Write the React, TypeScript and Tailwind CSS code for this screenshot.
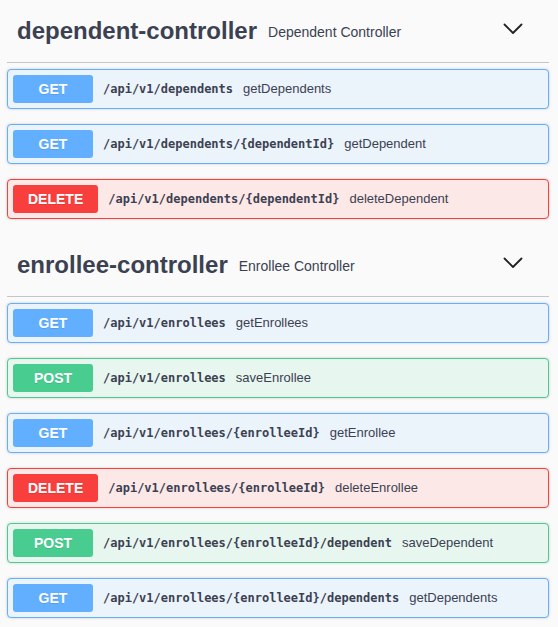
import React from "react";

type Method = "GET" | "POST" | "DELETE";

const methodStyles: Record<Method, { block: string; badge: string }> = {
  GET: { block: "bg-[#ebf3fb] border-[#61affe]", badge: "bg-[#61affe]" },
  POST: { block: "bg-[#e8f6f0] border-[#49cc90]", badge: "bg-[#49cc90]" },
  DELETE: { block: "bg-[#fde8e8] border-[#f93e3e]", badge: "bg-[#f93e3e]" },
};

const sections: {
  name: string;
  desc: string;
  ops: { method: Method; path: string; summary: string }[];
}[] = [
  {
    name: "dependent-controller",
    desc: "Dependent Controller",
    ops: [
      { method: "GET", path: "/api/v1/dependents", summary: "getDependents" },
      { method: "GET", path: "/api/v1/dependents/{dependentId}", summary: "getDependent" },
      { method: "DELETE", path: "/api/v1/dependents/{dependentId}", summary: "deleteDependent" },
    ],
  },
  {
    name: "enrollee-controller",
    desc: "Enrollee Controller",
    ops: [
      { method: "GET", path: "/api/v1/enrollees", summary: "getEnrollees" },
      { method: "POST", path: "/api/v1/enrollees", summary: "saveEnrollee" },
      { method: "GET", path: "/api/v1/enrollees/{enrolleeId}", summary: "getEnrollee" },
      { method: "DELETE", path: "/api/v1/enrollees/{enrolleeId}", summary: "deleteEnrollee" },
      { method: "POST", path: "/api/v1/enrollees/{enrolleeId}/dependent", summary: "saveDependent" },
      { method: "GET", path: "/api/v1/enrollees/{enrolleeId}/dependents", summary: "getDependents" },
    ],
  },
];

function Chevron() {
  return (
    <svg width="20" height="12" viewBox="0 0 20 12" fill="none">
      <polyline points="1.5,1.5 10,10 18.5,1.5" stroke="#222" strokeWidth="1.8" strokeLinecap="round" strokeLinejoin="round" />
    </svg>
  );
}

function OpBlock({ method, path, summary }: { method: Method; path: string; summary: string }) {
  const s = methodStyles[method];
  return (
    <div className={`flex items-center h-[40px] px-[5px] mb-[15px] border rounded-[4px] shadow-[0_0_3px_rgba(0,0,0,0.19)] ${s.block}`}>
      <div className={`flex items-center justify-center h-[28px] min-w-[80px] px-[15px] rounded-[3px] text-white text-[14px] font-bold [text-shadow:0_1px_0_rgba(0,0,0,0.1)] ${s.badge}`}>
        {method}
      </div>
      <span className="px-[10px] text-[12px] font-bold text-[#3b4151] [font-family:'DejaVu_Sans_Mono',monospace]">{path}</span>
      <span className="text-[13px] text-[#3b4151]">{summary}</span>
    </div>
  );
}

export default function App() {
  return (
    <div className="min-h-[627px] bg-[#fafafa] [font-family:'Liberation_Sans',Arial,sans-serif]">
      <div className="ml-[7px] w-[542px]">
        {sections.map((sec, i) => (
          <div key={sec.name} className={i > 0 ? "mt-[1px]" : ""}>
            <div className="flex items-center justify-between h-[63px] border-b border-[#c4c6cb] pl-[10px] pr-[26px]">
              <div className="flex items-baseline">
                <span className="text-[24px] leading-[28px] font-bold text-[#3b4151]">{sec.name}</span>
                <span className="relative -top-[2px] ml-[11px] text-[14px] text-[#3b4151]">{sec.desc}</span>
              </div>
              <div className="-mt-[4px]">
                <Chevron />
              </div>
            </div>
            <div className="mt-[6px]">
              {sec.ops.map((op, j) => (
                <OpBlock key={j} {...op} />
              ))}
            </div>
          </div>
        ))}
      </div>
    </div>
  );
}
